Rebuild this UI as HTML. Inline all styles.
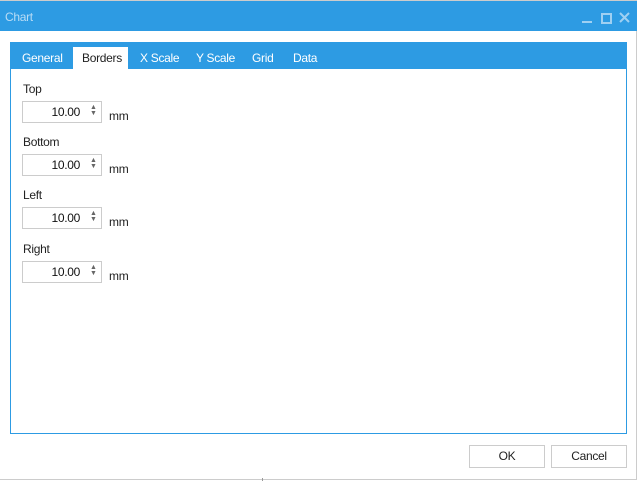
<!DOCTYPE html>
<html><head><style>
body{margin:0;width:639px;height:481px;background:#fff;font-family:"Liberation Sans",sans-serif;font-size:12px;letter-spacing:-0.3px;position:relative;overflow:hidden}
.win{position:absolute;left:0;top:0;width:636px;height:478px;border-top:1px solid #ccc;border-right:1px solid #ccc;border-bottom:1px solid #ccc;background:#fff}
.title{position:absolute;left:0;top:1px;width:637px;height:30px;background:#2d9be3;color:#b9dcf5;font-size:12px}
.title span{position:absolute;left:5px;top:9px}
.panel{position:absolute;left:10px;top:42px;width:615px;height:390px;border:1px solid #2d9be3;background:#fff}
.tabs{position:absolute;left:0;top:0;width:615px;height:26px;background:#2d9be3}
.tab{position:absolute;top:8px;color:#fff;font-size:12px}
.sel{position:absolute;left:62px;top:4px;width:55px;height:22px;background:#fff}
.lbl{position:absolute;left:12px;color:#222}
.box{position:absolute;left:11px;width:78px;height:20px;border:1px solid #ccc;background:#fff}
.box span{position:absolute;right:21px;top:3px;color:#111}
.sp{position:absolute;right:4px;top:3px;width:7px;font-size:7px;line-height:6px;color:#666}
.mm{position:absolute;left:98px;color:#222}
.btn{position:absolute;top:445px;width:74px;height:21px;border:1px solid #ccc;background:#fff;text-align:center;line-height:21px;color:#222}
</style></head><body>
<div class="win"></div>
<div class="title"><span>Chart</span>
<div style="position:absolute;left:582px;top:20px;width:10px;height:2px;background:#9fd0f2"></div>
<div style="position:absolute;left:601px;top:12px;width:7px;height:7px;border:2px solid #9fd0f2"></div>
<svg style="position:absolute;left:619px;top:11px" width="11" height="11"><path d="M1 1L10 10M10 1L1 10" stroke="#9fd0f2" stroke-width="2"/></svg>
</div>
<div style="position:absolute;left:262px;top:478px;width:1px;height:3px;background:#999"></div>
<div class="panel">
<div class="tabs"><div class="sel"></div>
<div class="tab" style="left:11px">General</div>
<div class="tab" style="left:71px;color:#222">Borders</div>
<div class="tab" style="left:129px">X Scale</div>
<div class="tab" style="left:185px">Y Scale</div>
<div class="tab" style="left:241px">Grid</div>
<div class="tab" style="left:282px">Data</div>
</div>
<div class="lbl" style="top:39px">Top</div>
<div class="box" style="top:58px"><span>10.00</span><div class="sp">▲<br>▼</div></div>
<div class="mm" style="top:66px">mm</div>
<div class="lbl" style="top:92px">Bottom</div>
<div class="box" style="top:111px"><span>10.00</span><div class="sp">▲<br>▼</div></div>
<div class="mm" style="top:119px">mm</div>
<div class="lbl" style="top:145px">Left</div>
<div class="box" style="top:164px"><span>10.00</span><div class="sp">▲<br>▼</div></div>
<div class="mm" style="top:172px">mm</div>
<div class="lbl" style="top:199px">Right</div>
<div class="box" style="top:218px"><span>10.00</span><div class="sp">▲<br>▼</div></div>
<div class="mm" style="top:226px">mm</div>
</div>
<div class="btn" style="left:469px">OK</div>
<div class="btn" style="left:551px">Cancel</div>
</body></html>
